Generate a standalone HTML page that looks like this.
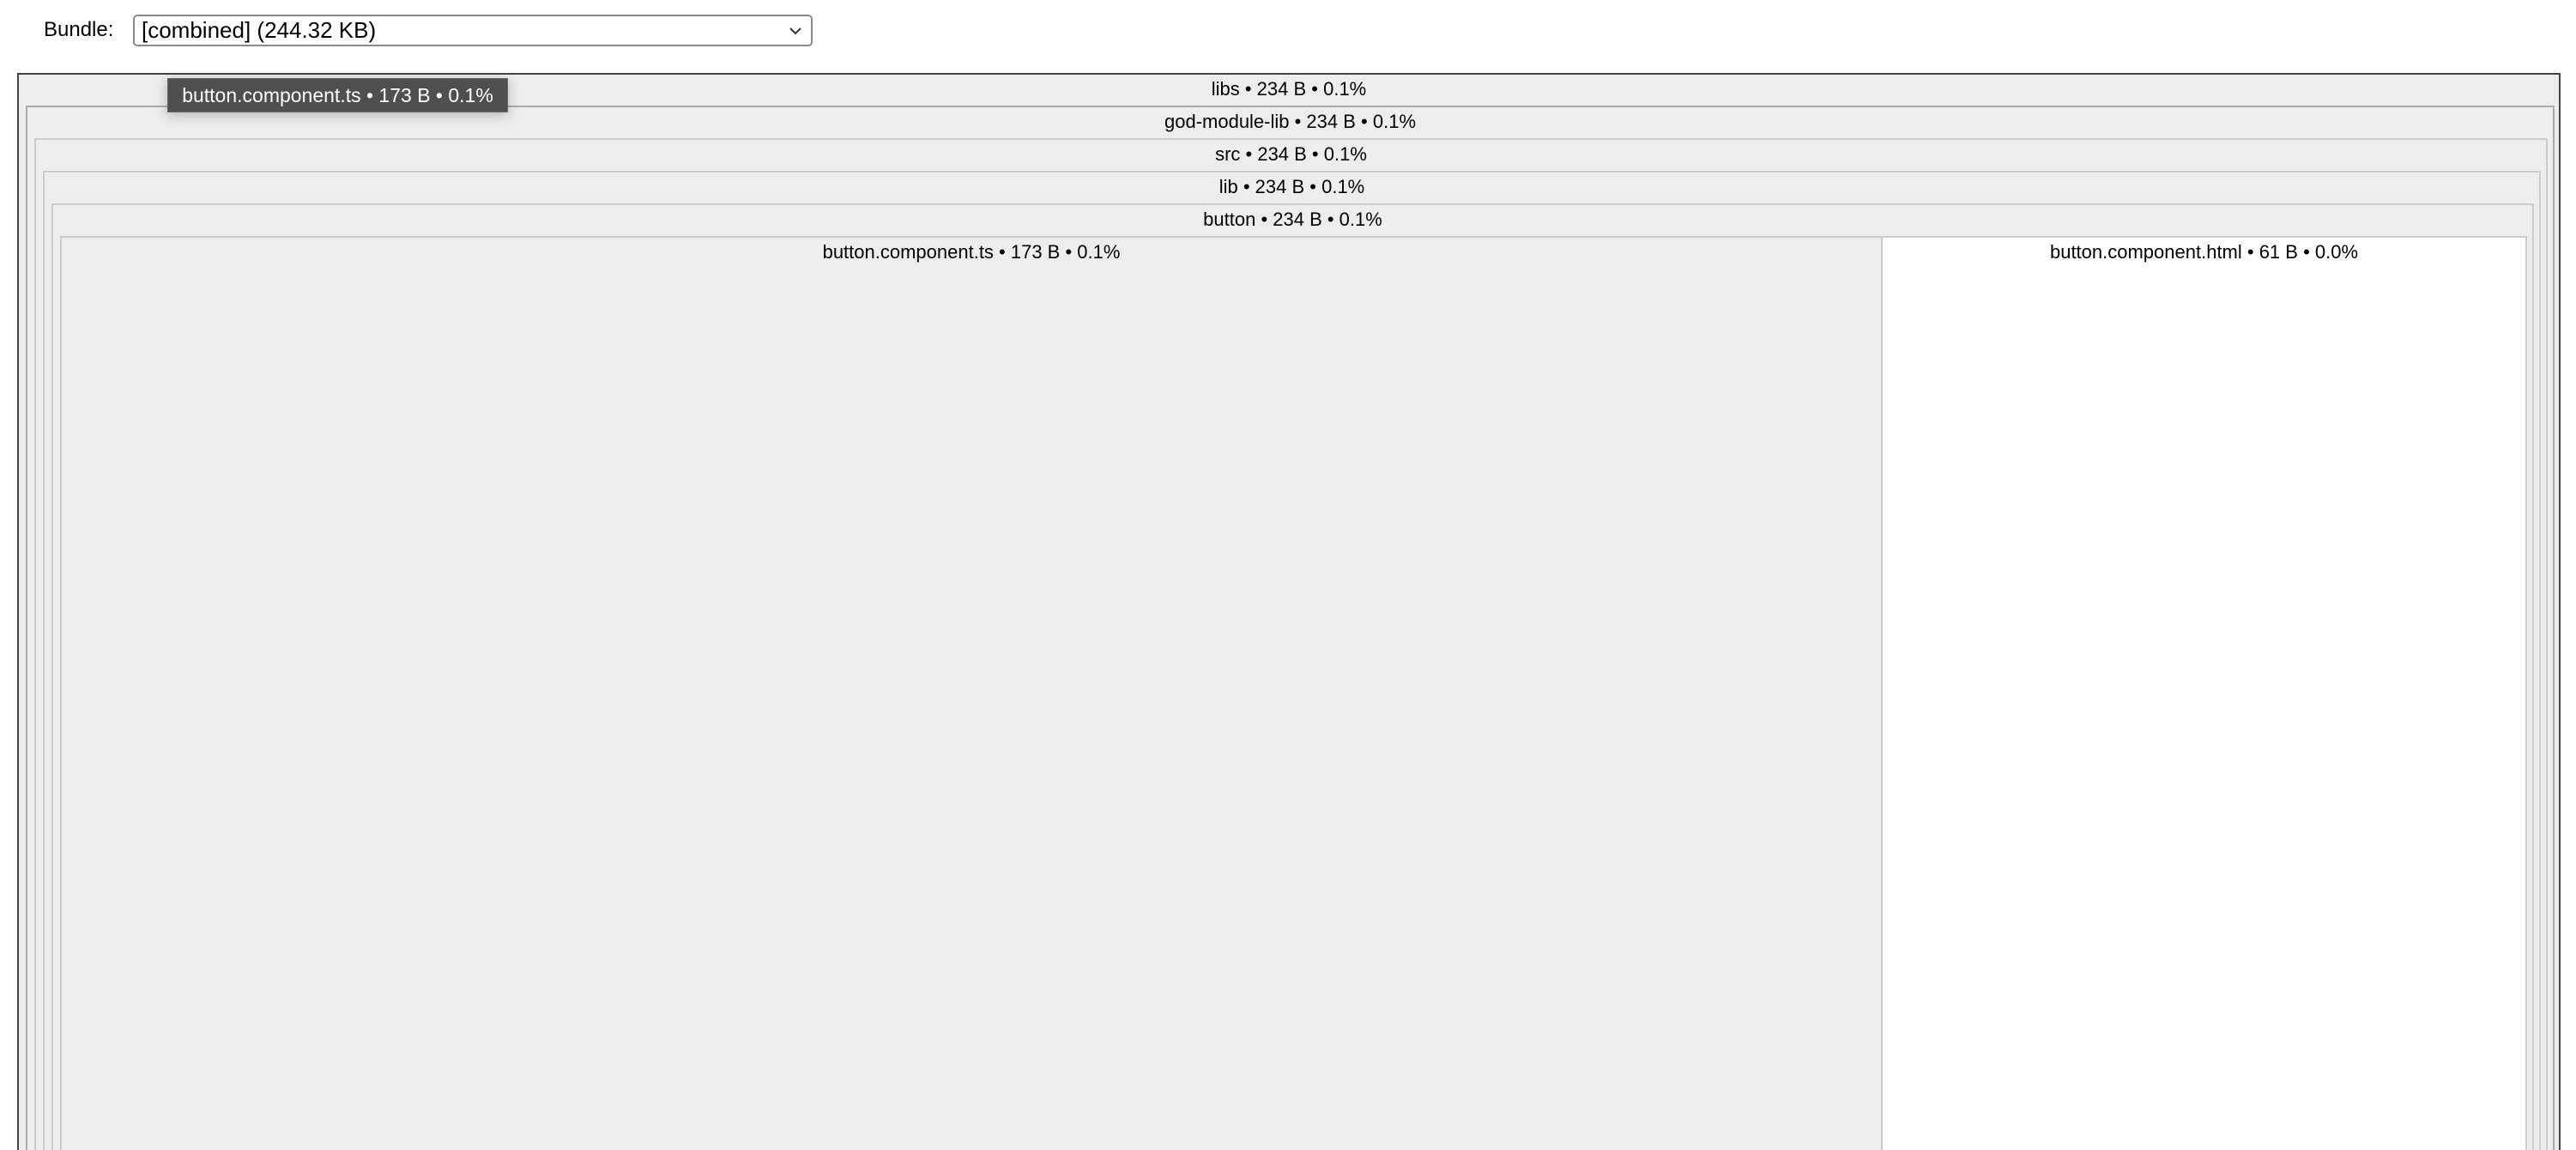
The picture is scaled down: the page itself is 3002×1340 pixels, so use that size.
<!DOCTYPE html>
<html><head><meta charset="utf-8"><style>
html,body{margin:0;padding:0;width:3002px;height:1340px;overflow:hidden;background:#fff;font-family:"Liberation Sans",Arial,sans-serif;}
.b{position:absolute;box-sizing:border-box;background:#ededed;border:2px solid #ccc;border-bottom:none;text-align:center;font-size:22px;color:#000;line-height:34px;}
.lbl{position:absolute;left:51px;top:21px;font-size:24px;}
.sel{position:absolute;left:155px;top:17px;width:792px;height:37px;box-sizing:border-box;border:2px solid #8a8a8a;border-radius:5px;font-size:26px;line-height:33px;padding-left:8px;}
.tip{position:absolute;left:195px;top:91px;width:397px;height:40px;box-sizing:border-box;background:#4f4f4f;border:1px solid #666;color:#fff;font-size:23px;line-height:38px;text-align:center;box-shadow:0 3px 14px rgba(0,0,0,.25);}
</style></head><body>
<div class="lbl">Bundle:</div>
<div class="sel">[combined] (244.32 KB)<svg style="position:absolute;right:10px;top:11px" width="16" height="12" viewBox="0 0 16 12"><path d="M2 3 L8 9 L14 3" fill="none" stroke="#333" stroke-width="2"/></svg></div>
<div class="b" style="left:20px;top:85px;width:2964px;height:1255px;border-color:#444">libs • 234 B • 0.1%</div>
<div class="b" style="left:30px;top:123px;width:2947px;height:1217px;border-color:#aaa">god-module-lib • 234 B • 0.1%</div>
<div class="b" style="left:40px;top:161px;width:2929px;height:1179px">src • 234 B • 0.1%</div>
<div class="b" style="left:50px;top:199px;width:2911px;height:1141px">lib • 234 B • 0.1%</div>
<div class="b" style="left:60px;top:237px;width:2893px;height:1103px">button • 234 B • 0.1%</div>
<div class="b" style="left:70px;top:275px;width:2124px;height:1065px">button.component.ts • 173 B • 0.1%</div>
<div class="b" style="left:2192px;top:275px;width:753px;height:1065px;background:#fff">button.component.html • 61 B • 0.0%</div>
<div class="tip">button.component.ts • 173 B • 0.1%</div>
</body></html>
